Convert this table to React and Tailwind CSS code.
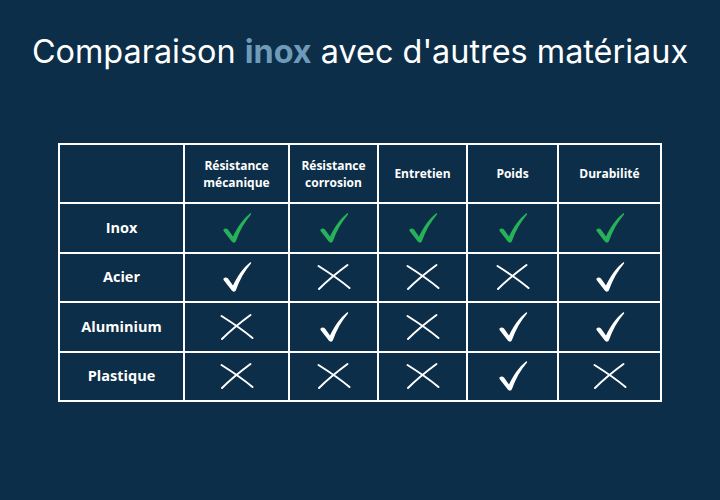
import React from "react";

const Check = ({ green }) => (
  <svg width="30" height="32" viewBox="0 0 30 32" className="inline-block">
    <path
      d="M1.5 17.5 C2.8 16 4.8 16 6 17.5 L11 24.5 C15.5 15 21 7 28 1.5 C28.8 1 29.5 1.8 29 2.5 C22.5 10 17.5 19 14 29 C13.3 31 11 31.2 9.8 29.6 L1.8 19.2 C1.4 18.6 1.2 18 1.5 17.5 Z"
      fill={green ? "#27b25a" : "#ffffff"}
    />
  </svg>
);

const Cross = () => (
  <svg width="36" height="28" viewBox="0 0 36 28" className="inline-block">
    <path d="M2.5 3 C12 9 24 17 33.5 25" stroke="#ffffff" strokeWidth="2" strokeLinecap="round" fill="none" />
    <path d="M31.5 2 C22 9 12 17 3 26" stroke="#ffffff" strokeWidth="2" strokeLinecap="round" fill="none" />
  </svg>
);

const headers = [
  ["Résistance", "mécanique"],
  ["Résistance", "corrosion"],
  ["Entretien"],
  ["Poids"],
  ["Durabilité"],
];

const rows = [
  { name: "Inox", vals: [1, 1, 1, 1, 1], green: true },
  { name: "Acier", vals: [1, 0, 0, 0, 1] },
  { name: "Aluminium", vals: [0, 1, 0, 1, 1] },
  { name: "Plastique", vals: [0, 0, 0, 1, 0] },
];

const widths = ["w-[125px]", "w-[105px]", "w-[89px]", "w-[89px]", "w-[91px]", "w-[103px]"];

export default function App() {
  return (
    <div className="w-[720px] h-[500px] bg-[#0c2e48] flex flex-col items-center overflow-hidden">
      <h1
        className="mt-[29px] text-[32.4px] leading-[46px] text-white font-normal whitespace-nowrap"
        style={{ fontFamily: "Inter, 'Liberation Sans', sans-serif" }}
      >
        Comparaison <span className="font-bold text-[#6f9bbb]">inox</span> avec d'autres matériaux
      </h1>
      <table
        className="mt-[68px] table-fixed border-collapse border-2 border-white text-white"
        style={{ fontFamily: "'Open Sans', 'Liberation Sans', sans-serif" }}
      >
        <colgroup>
          {widths.map((w, i) => (
            <col key={i} className={w} />
          ))}
        </colgroup>
        <thead>
          <tr className="h-[59px]">
            <th className="border-2 border-white"></th>
            {headers.map((h, i) => (
              <th key={i} className="border-2 border-white text-[12px] leading-[17px] font-bold text-center">
                {h.map((l, j) => (
                  <div key={j}>{l}</div>
                ))}
              </th>
            ))}
          </tr>
        </thead>
        <tbody>
          {rows.map((r) => (
            <tr key={r.name} className="h-[49.5px]">
              <td className="border-2 border-white text-[14.5px] font-bold text-center">{r.name}</td>
              {r.vals.map((v, i) => (
                <td key={i} className="border-2 border-white text-center align-middle">
                  <div className="flex items-center justify-center">
                    {v ? <Check green={r.green} /> : <Cross />}
                  </div>
                </td>
              ))}
            </tr>
          ))}
        </tbody>
      </table>
    </div>
  );
}
